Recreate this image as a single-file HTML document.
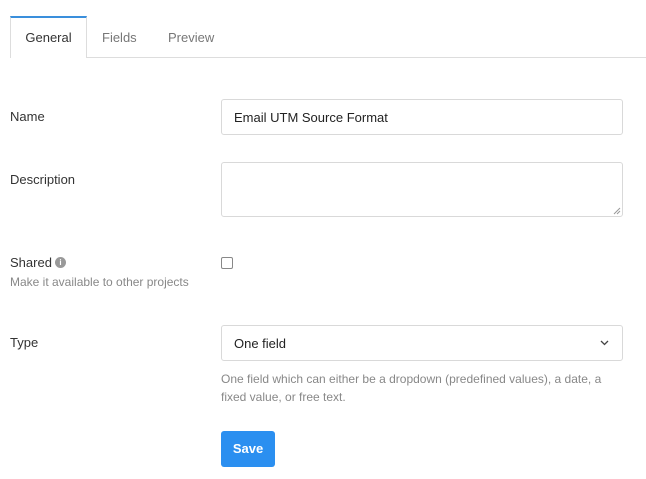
<!DOCTYPE html>
<html><head><style>
*{box-sizing:border-box;margin:0;padding:0}
body{width:646px;height:479px;background:#fff;font-family:"Liberation Sans",sans-serif;font-size:13px;color:#333;position:relative;overflow:hidden}
.a{position:absolute}
.tabline{left:10px;top:57px;width:636px;height:1px;background:#ddd}
.tab{left:10px;top:16px;width:77px;height:42px;border:1px solid #ddd;border-top:2px solid #3a8fdc;border-bottom:none;background:#fff;text-align:center;line-height:40px}
.t2{color:#777;top:30px}
.lbl{left:10px}
.box{left:221px;width:402px;border:1px solid #d9d9d9;border-radius:3px;background:#fff}
.help{color:#888;font-size:12px}
</style></head><body>
<div class="a tabline"></div>
<div class="a tab">General</div>
<div class="a t2" style="left:102px">Fields</div>
<div class="a t2" style="left:168px">Preview</div>

<div class="a lbl" style="top:109px">Name</div>
<div class="a box" style="top:99px;height:36px;padding:10px 12px;color:#222">Email UTM Source Format</div>

<div class="a lbl" style="top:172px">Description</div>
<div class="a box" style="top:162px;height:55px"></div>
<svg class="a" style="left:613px;top:207px" width="8" height="8"><path d="M1 7L7 1M4 7L7 4" stroke="#999"/></svg>

<div class="a lbl" style="top:255px">Shared</div>
<div class="a" style="left:55px;top:257px;width:11px;height:11px;border-radius:50%;background:#999;color:#fff;font-size:8px;font-weight:bold;text-align:center;line-height:11px">i</div>
<div class="a lbl help" style="top:275px">Make it available to other projects</div>
<div class="a" style="left:221px;top:257px;width:12px;height:12px;border:1px solid #888;border-radius:2px"></div>

<div class="a lbl" style="top:335px">Type</div>
<div class="a box" style="top:325px;height:36px;padding:10px 12px;color:#222">One field</div>
<svg class="a" style="left:600px;top:340px" width="9" height="6"><path d="M1 1L4.5 4.5L8 1" stroke="#444" fill="none" stroke-width="1.3"/></svg>

<div class="a help" style="left:221px;top:370px;line-height:18px;width:400px">One field which can either be a dropdown (predefined values), a date, a fixed value, or free text.</div>

<div class="a" style="left:221px;top:431px;width:54px;height:36px;background:#2b8ff0;border-radius:3px;color:#fff;font-weight:bold;text-align:center;line-height:36px">Save</div>
</body></html>
